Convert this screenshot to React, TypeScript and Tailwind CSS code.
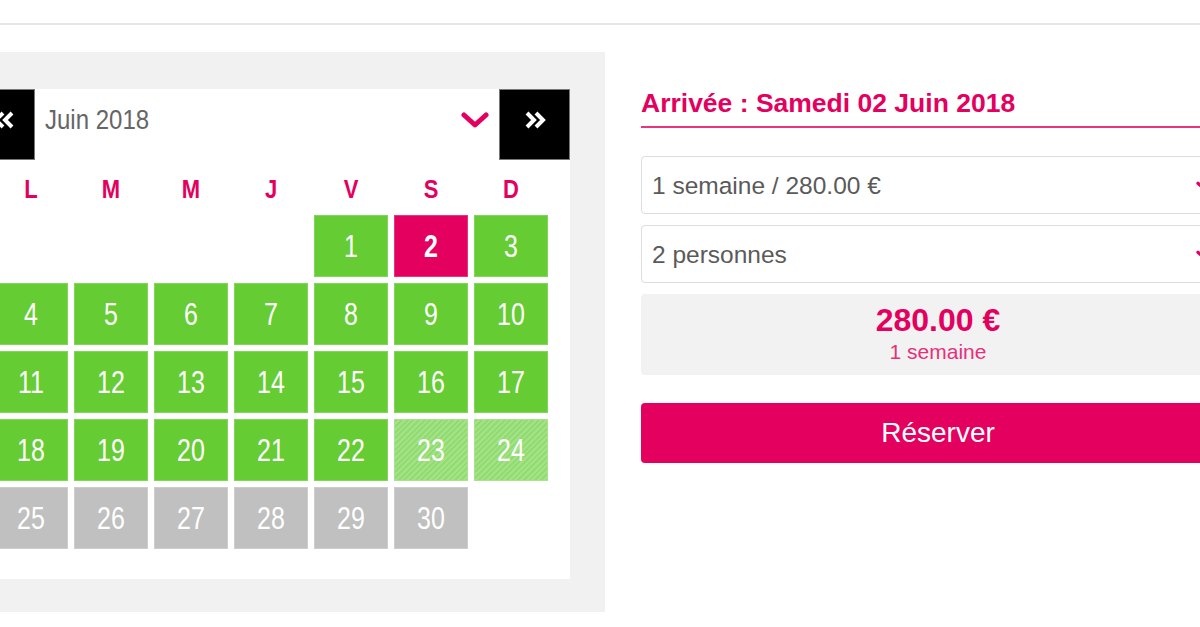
import React from "react";

const PINK = "#e3005f";

type Cell = { d: number; kind: "green" | "pink" | "hatch" | "gray" } | null;

function buildCells(): Cell[] {
  const cells: Cell[] = [null, null, null, null];
  for (let d = 1; d <= 30; d++) {
    let kind: "green" | "pink" | "hatch" | "gray" = "green";
    if (d === 2) kind = "pink";
    else if (d === 23 || d === 24) kind = "hatch";
    else if (d >= 25) kind = "gray";
    cells.push({ d, kind });
  }
  return cells;
}

function DoubleChevron({ dir }: { dir: "left" | "right" }) {
  return (
    <svg width="22" height="18" viewBox="0 0 22 18" fill="none">
      {dir === "right" ? (
        <>
          <path d="M3 2 L10 9 L3 16" stroke="white" strokeWidth="4" strokeLinejoin="miter" />
          <path d="M12 2 L19 9 L12 16" stroke="white" strokeWidth="4" strokeLinejoin="miter" />
        </>
      ) : (
        <>
          <path d="M19 2 L12 9 L19 16" stroke="white" strokeWidth="4" strokeLinejoin="miter" />
          <path d="M10 2 L3 9 L10 16" stroke="white" strokeWidth="4" strokeLinejoin="miter" />
        </>
      )}
    </svg>
  );
}

function ChevronDown({ w = 28, h = 16, sw = 5 }: { w?: number; h?: number; sw?: number }) {
  return (
    <svg width={w} height={h} viewBox="0 0 28 16" fill="none">
      <path d="M3 3 L14 13 L25 3" stroke={PINK} strokeWidth={sw} strokeLinecap="round" strokeLinejoin="round" />
    </svg>
  );
}

export default function App() {
  const cells = buildCells();
  const days = ["L", "M", "M", "J", "V", "S", "D"];
  return (
    <div
      className="w-[1200px] h-[627px] overflow-hidden bg-white"
      style={{ fontFamily: '"Liberation Sans", Arial, sans-serif' }}
    >
      <div className="pt-[23px]">
        <div className="h-[2px] bg-[#e6e6e6]" />
      </div>
      <div className="mt-[27px] flex">
        {/* Left: calendar panel */}
        <div className="ml-[-71px] w-[676px] shrink-0 bg-[#f1f1f1] pt-[37px] pr-[35px] pb-[33px] pl-[35px]">
          <div className="w-[606px] h-[490px] bg-white">
            <div className="flex h-[71px] items-center">
              <div className="w-[71px] h-[71px] bg-black border border-[#777] flex items-center justify-center pb-[10px] pl-[8px]">
                <DoubleChevron dir="left" />
              </div>
              <div className="ml-[10px] flex-1 pb-[10px] text-[24px] text-[#666] leading-none">
                <span className="inline-block scale-y-[1.12]">Juin 2018</span>
              </div>
              <div className="mr-[10px] flex items-center pb-[10px]">
                <ChevronDown />
              </div>
              <div className="w-[71px] h-[71px] bg-black border border-[#777] flex items-center justify-center pb-[10px]">
                <DoubleChevron dir="right" />
              </div>
            </div>
            <div className="pl-[30px] pr-[22px]">
              <div className="grid grid-cols-7 gap-x-[6px] h-[55px] items-center pt-[4px]">
                {days.map((d, i) => (
                  <div key={i} className="text-center text-[22px] font-bold text-[#e3005f] leading-none">
                    <span className="inline-block scale-y-[1.2]">{d}</span>
                  </div>
                ))}
              </div>
              <div className="grid grid-cols-7 gap-x-[6px] gap-y-[6px]">
                {cells.map((c, i) => {
                  if (!c) return <div key={i} className="h-[62px]" />;
                  let cls = "";
                  if (c.kind === "green") cls = "bg-[#66cc33] border border-[#7fd65a]";
                  else if (c.kind === "pink") cls = "bg-[#e3005f] border border-[#e8337f] font-bold";
                  else if (c.kind === "gray") cls = "bg-[#c0c0c0] border border-[#cdcdcd] text-[#f4f4f4]";
                  else
                    cls =
                      "border border-[#a6e38a] bg-[repeating-linear-gradient(135deg,#92db70_0px,#92db70_2px,#a3e286_2px,#a3e286_4px)]";
                  return (
                    <div
                      key={i}
                      className={`h-[62px] flex items-center justify-center text-[25px] text-white leading-none ${cls}`}
                    >
                      <span className="inline-block scale-y-[1.22]">{c.d}</span>
                    </div>
                  );
                })}
              </div>
            </div>
          </div>
        </div>

        {/* Right: booking panel */}
        <div className="ml-[36px] w-[594px] shrink-0 pt-[37px]">
          <div className="text-[26.5px] font-bold leading-[28px] text-[#e3005f] pb-[9px] border-b-2 border-[#e8357d] whitespace-nowrap">
            Arrivée : Samedi 02 Juin 2018
          </div>
          <div className="mt-[28px] h-[58px] border border-[#dddddd] rounded-[4px] flex items-center justify-between pl-[10px] pr-[20px] pt-[3px]">
            <span className="text-[24.5px] text-[#5a5a5a]">1 semaine / 280.00 €</span>
            <ChevronDown w={18} h={11} sw={5} />
          </div>
          <div className="mt-[11px] h-[58px] border border-[#dddddd] rounded-[4px] flex items-center justify-between pl-[10px] pr-[20px] pt-[3px]">
            <span className="text-[24.5px] text-[#5a5a5a]">2 personnes</span>
            <ChevronDown w={18} h={11} sw={5} />
          </div>
          <div className="mt-[11px] h-[81px] rounded-[4px] bg-[#f2f2f2] flex flex-col items-center pt-[8px]">
            <div className="text-[32px] font-bold leading-[36px] text-[#e3005f]">280.00 €</div>
            <div className="text-[21px] leading-[24px] mt-[2px] text-[#e8307a]">1 semaine</div>
          </div>
          <div className="mt-[28px] h-[60px] rounded-[4px] bg-[#e3005f] flex items-center justify-center text-[28px] text-white">
            Réserver
          </div>
        </div>
      </div>
    </div>
  );
}
